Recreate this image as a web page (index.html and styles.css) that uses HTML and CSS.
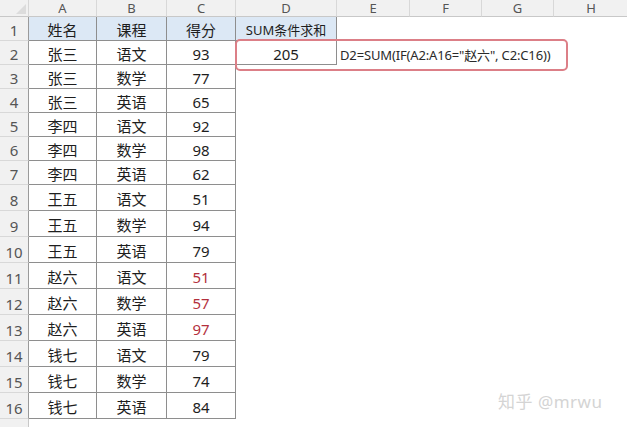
FILE: index.html
```html
<!DOCTYPE html>
<html lang="zh">
<head>
<meta charset="utf-8">
<link rel="stylesheet" href="styles.css">
</head>
<body>
<div class="sheet">
  <div class="corner"><svg width="10" height="10" viewBox="0 0 10 10"><polygon points="10,0 10,10 0,10" fill="#dcdcdc"/></svg></div>
  <div class="ch">A</div><div class="ch">B</div><div class="ch">C</div><div class="ch">D</div><div class="ch">E</div><div class="ch">F</div><div class="ch">G</div><div class="ch">H</div>

  <div class="rh">1</div><div class="c hd">姓名</div><div class="c hd">课程</div><div class="c hd">得分</div><div class="c hd small">SUM条件求和</div><div class="e"></div><div class="e"></div><div class="e"></div><div class="e"></div>

  <div class="rh">2</div><div class="c">张三</div><div class="c">语文</div><div class="c num">93</div><div class="c num">205</div><div class="e"><span class="formula">D2=SUM(IF(A2:A16="赵六", C2:C16))</span></div><div class="e"></div><div class="e"></div><div class="e"></div>

  <div class="rh">3</div><div class="c">张三</div><div class="c">数学</div><div class="c num">77</div><div class="e"></div><div class="e"></div><div class="e"></div><div class="e"></div><div class="e"></div>
  <div class="rh">4</div><div class="c">张三</div><div class="c">英语</div><div class="c num">65</div><div class="e"></div><div class="e"></div><div class="e"></div><div class="e"></div><div class="e"></div>
  <div class="rh">5</div><div class="c">李四</div><div class="c">语文</div><div class="c num">92</div><div class="e"></div><div class="e"></div><div class="e"></div><div class="e"></div><div class="e"></div>
  <div class="rh">6</div><div class="c">李四</div><div class="c">数学</div><div class="c num">98</div><div class="e"></div><div class="e"></div><div class="e"></div><div class="e"></div><div class="e"></div>
  <div class="rh">7</div><div class="c">李四</div><div class="c">英语</div><div class="c num">62</div><div class="e"></div><div class="e"></div><div class="e"></div><div class="e"></div><div class="e"></div>
  <div class="rh">8</div><div class="c">王五</div><div class="c">语文</div><div class="c num">51</div><div class="e"></div><div class="e"></div><div class="e"></div><div class="e"></div><div class="e"></div>
  <div class="rh">9</div><div class="c">王五</div><div class="c">数学</div><div class="c num">94</div><div class="e"></div><div class="e"></div><div class="e"></div><div class="e"></div><div class="e"></div>
  <div class="rh">10</div><div class="c">王五</div><div class="c">英语</div><div class="c num">79</div><div class="e"></div><div class="e"></div><div class="e"></div><div class="e"></div><div class="e"></div>
  <div class="rh">11</div><div class="c">赵六</div><div class="c">语文</div><div class="c num red">51</div><div class="e"></div><div class="e"></div><div class="e"></div><div class="e"></div><div class="e"></div>
  <div class="rh">12</div><div class="c">赵六</div><div class="c">数学</div><div class="c num red">57</div><div class="e"></div><div class="e"></div><div class="e"></div><div class="e"></div><div class="e"></div>
  <div class="rh">13</div><div class="c">赵六</div><div class="c">英语</div><div class="c num red">97</div><div class="e"></div><div class="e"></div><div class="e"></div><div class="e"></div><div class="e"></div>
  <div class="rh">14</div><div class="c">钱七</div><div class="c">语文</div><div class="c num">79</div><div class="e"></div><div class="e"></div><div class="e"></div><div class="e"></div><div class="e"></div>
  <div class="rh">15</div><div class="c">钱七</div><div class="c">数学</div><div class="c num">74</div><div class="e"></div><div class="e"></div><div class="e"></div><div class="e"></div><div class="e"></div>
  <div class="rh">16</div><div class="c">钱七</div><div class="c">英语</div><div class="c num">84</div><div class="e"></div><div class="e"></div><div class="e"></div><div class="e"></div><div class="e"></div>
  <div class="rh last"></div>

  <div class="highlight"></div>
  <div class="watermark">知乎 @mrwu</div>
</div>
</body>
</html>
```
FILE: styles.css
```css
html, body {
  margin: 0;
  padding: 0;
  background: #ffffff;
}
body {
  width: 627px;
  height: 427px;
  overflow: hidden;
  font-family: "Noto Sans", "Noto Sans CJK SC", sans-serif;
  color: #222;
}
.sheet {
  position: relative;
  display: grid;
  grid-template-columns: 29px 68px 70px 69px 101px 73px 72px 72px 75px;
  grid-template-rows: 17px repeat(7, 24px) repeat(9, 26px) 8px;
  width: 627px;
  height: 427px;
}
.sheet > div {
  box-sizing: border-box;
}
.corner {
  background: #f1f1f1;
  border-right: 1px solid #d6d6d6;
  border-bottom: 1px solid #c8c8c8;
  display: flex;
  align-items: flex-end;
  justify-content: flex-end;
  padding: 0 2px 2px 0;
}
.corner svg { display: block; }
.ch {
  background: #f1f1f1;
  border-right: 1px solid #d8d8d8;
  border-bottom: 1px solid #c8c8c8;
  color: #555;
  font-size: 13px;
  line-height: 15px;
  padding-top: 1px;
  text-align: center;
}
.rh {
  background: #f1f1f1;
  border-right: 1px solid #9a9a9a;
  border-bottom: 1px solid #d8d8d8;
  color: #555;
  font-size: 15px;
  display: flex;
  align-items: flex-end;
  justify-content: center;
  padding-bottom: 1px;
  line-height: 18px;
}
.rh.last {
  border-right: 1px solid #c8c8c8;
  border-bottom: none;
}
.c {
  border-right: 1px solid #8e8e8e;
  border-bottom: 1px solid #8e8e8e;
  display: flex;
  align-items: center;
  justify-content: center;
  font-size: 15px;
  padding-top: 2px;
  color: #1e1e1e;
}
.c.hd {
  background: #dce8f5;
}
.c.small { font-size: 13px; }
.c.num { font-size: 15px; }
.c.red { color: #b3303d; }
.e {
  position: relative;
}
.formula {
  position: absolute;
  left: 3px;
  top: 4px;
  white-space: nowrap;
  font-size: 13px;
  letter-spacing: -0.15px;
  color: #2a2a2a;
}
.highlight {
  position: absolute;
  left: 235px;
  top: 39px;
  width: 333px;
  height: 32px;
  box-sizing: border-box;
  border: 2px solid #dc7f87;
  border-radius: 5px;
}
.watermark {
  position: absolute;
  left: 498px;
  top: 388px;
  font-size: 17px;
  color: #d4d4d4;
  letter-spacing: 0.5px;
}
```
